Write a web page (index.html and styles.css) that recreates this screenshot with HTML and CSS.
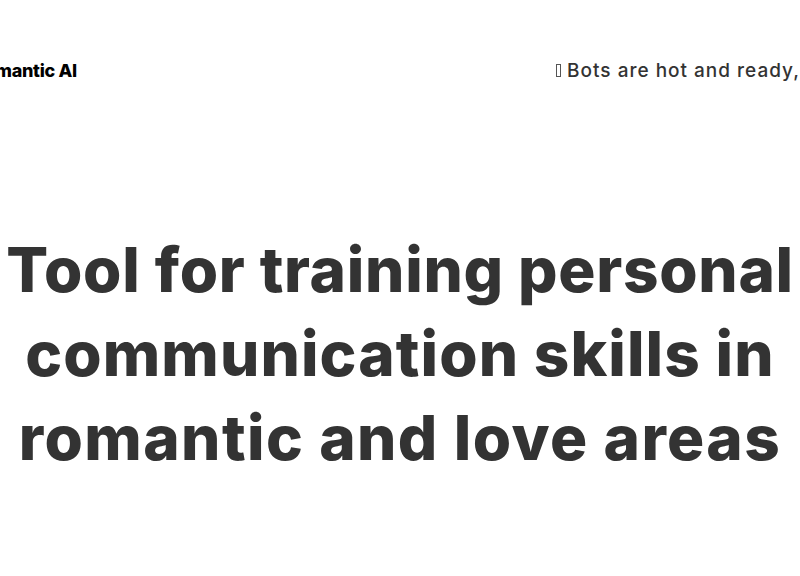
FILE: index.html
```html
<!DOCTYPE html>
<html lang="en">
<head>
<meta charset="utf-8">
<link rel="stylesheet" href="styles.css">
</head>
<body>
<div class="page">
  <header class="header">
    <div class="logo">Romantic AI</div>
    <div class="promo"><span class="tofu"></span>Bots are hot and ready,</div>
  </header>
  <main class="hero">
    <h1 class="title"><span class="line line-1">Tool for training personal</span> <span class="line line-2">communication skills in</span> <span class="line">romantic and love areas</span></h1>
  </main>
</div>
</body>
</html>
```
FILE: styles.css
```css
html, body {
  margin: 0;
  padding: 0;
  background: #fff;
  overflow: hidden;
}
.page {
  width: 800px;
  height: 576px;
  overflow: hidden;
  font-family: Inter, "Noto Sans", sans-serif;
  color: #333;
}
.header {
  display: flex;
  justify-content: space-between;
  align-items: center;
  height: 40px;
  margin: 50px 0 0 -27px;
  width: 827px;
}
.logo {
  font-size: 18px;
  font-weight: 800;
  color: #000;
  letter-spacing: -0.3px;
}
.promo {
  display: flex;
  align-items: center;
  font-size: 19px;
  font-weight: 500;
  color: #333;
  letter-spacing: 1px;
}
.tofu {
  display: inline-block;
  width: 3px;
  height: 11px;
  border: 1px solid #555;
  margin-right: 6px;
}
.hero {
  padding-top: 138px;
  text-align: center;
}
.title {
  margin: 0;
  font-size: 62px;
  line-height: 84px;
  font-weight: 800;
  color: #333;
  letter-spacing: 1.4px;
}
.line {
  display: block;
  white-space: nowrap;
}
.line-1 {
  letter-spacing: 0.7px;
}
.line-2 {
  letter-spacing: 1.1px;
}
```
